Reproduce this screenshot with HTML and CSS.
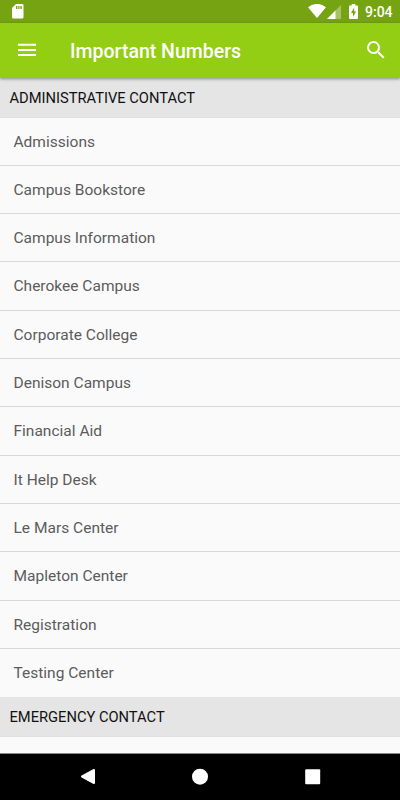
FILE: index.html
```html
<!DOCTYPE html>
<html lang="en">
<head>
<meta charset="utf-8">
<title>Important Numbers</title>
<link rel="stylesheet" href="styles.css">
</head>
<body>
<div class="screen">
  <div class="status">
    <svg class="sd" width="12" height="15" viewBox="0 0 12 15"><path fill="#fff" d="M4 0h6.300a1.200 1.200 0 0 1 1.200 1.200v12a1.300 1.300 0 0 1-1.300 1.300H1.300A1.300 1.300 0 0 1 0 13.200V4z"/><path fill="#76a311" d="M4 2h1.300v3H4zM6.200 2h1.300v3H6.200zM8.400 2h1.300v3H8.400z"/></svg>
    <svg class="wifi" width="18" height="14" viewBox="0 0 18 14"><path fill="#fff" d="M0 3.200Q9-3.400 18 3.200L9 14z"/></svg>
    <svg class="signal" width="14" height="14" viewBox="0 0 14 14"><path fill="#fff" opacity=".35" d="M14 0v14H0z"/><path fill="#fff" d="M8.500 5.500V14H0z"/></svg>
    <svg class="battery" width="9" height="15" viewBox="0 0 9 15"><path fill="#fff" d="M2.700 0h3.600v1.500H8a1 1 0 0 1 1 1V14a1 1 0 0 1-1 1H1a1 1 0 0 1-1-1V2.500a1 1 0 0 1 1-1h1.700z"/><path fill="#76a311" d="M5.200 3.600 2 9h2v3.800L7.200 7.500h-2z"/></svg>
    <span class="time">9:04</span>
  </div>
  <header class="bar">
    <svg class="menu" width="18" height="14" viewBox="0 0 18 14"><path fill="#fff" d="M0 .7h18v2H0zM0 5.900h18v2H0zM0 11.100h18v2H0z"/></svg>
    <h1>Important Numbers</h1>
    <svg class="search" width="24" height="24" viewBox="0 0 24 24"><path fill="#fff" d="M15.500 14h-.79l-.28-.27A6.471 6.471 0 0 0 16 9.500 6.500 6.500 0 1 0 9.500 16c1.610 0 3.090-.59 4.230-1.570l.27.28v.79l5 4.990L20.490 19l-4.990-5zm-6 0C7.010 14 5 11.990 5 9.500S7.010 5 9.500 5 14 7.010 14 9.500 11.990 14 9.500 14z"/></svg>
  </header>
  <main class="content">
    <h2>ADMINISTRATIVE CONTACT</h2>
    <ul>
      <li>Admissions</li>
      <li>Campus Bookstore</li>
      <li>Campus Information</li>
      <li>Cherokee Campus</li>
      <li>Corporate College</li>
      <li>Denison Campus</li>
      <li>Financial Aid</li>
      <li>It Help Desk</li>
      <li>Le Mars Center</li>
      <li>Mapleton Center</li>
      <li>Registration</li>
      <li>Testing Center</li>
    </ul>
    <h2>EMERGENCY CONTACT</h2>
  </main>
  <nav class="nav">
    <svg width="16" height="18" viewBox="0 0 16 18"><path fill="#fff" stroke="#fff" stroke-width="2" stroke-linejoin="round" d="M14 2v13L2 8.500z"/></svg>
    <svg width="18" height="18" viewBox="0 0 18 18"><circle cx="8" cy="8.700" r="8" fill="#fff"/></svg>
    <svg width="16" height="18" viewBox="0 0 16 18"><rect x=".2" y="1.200" width="15" height="15" rx="1" fill="#fff"/></svg>
  </nav>
</div>
</body>
</html>
```
FILE: styles.css
```css
* { box-sizing: border-box; margin: 0; padding: 0; }
body { font-family: Roboto, "Liberation Sans", sans-serif; background: #fafafa; }
svg { display: block; flex: none; }
.screen { width: 400px; height: 800px; display: flex; flex-direction: column; overflow: hidden; }
.status { height: 23px; flex: none; background: #76a311; display: flex; align-items: flex-start; padding: 4px 7px 0 12px; }
.wifi { margin-left: auto; }
.signal { margin-left: 1px; margin-top: 1px; }
.battery { margin-left: 8px; }
.time { width: 28px; margin-left: 7px; color: #fff; font-size: 14px; font-weight: 500; line-height: 17px; white-space: nowrap; }
.bar { height: 55px; flex: none; background: #93cd14; display: flex; align-items: center; padding: 0 12px 0 18px; position: relative; z-index: 1; box-shadow: 0 1px 3px rgba(0, 0, 0, .4); }
.search { margin-left: auto; margin-bottom: 1px; }
.menu { margin-bottom: 1px; }
h1 { margin-left: 34px; font-size: 19.500px; font-weight: 500; color: #fff; line-height: 24px; padding-top: 2px; }
.content { flex: 1; min-height: 0; overflow: hidden; background: #fafafa; border-bottom: 1px solid #8a8a8a; }
h2 { height: 39.500px; line-height: 41px; padding-left: 9.500px; background: #e5e5e5; color: #111; font-size: 14.700px; font-weight: 400; border-bottom: 1px solid #e0e0e0; }
ul { list-style: none; }
li { height: 48.340px; line-height: 49.200px; padding-left: 13.500px; color: #5c5c5c; font-size: 15.500px; letter-spacing: .01px; border-bottom: 1px solid #d8d8d8; }
li:last-child { border-bottom: 0; }
.nav { height: 46px; flex: none; background: #000; display: flex; align-items: center; justify-content: space-between; padding: 0 79px 0 80px; }
```
